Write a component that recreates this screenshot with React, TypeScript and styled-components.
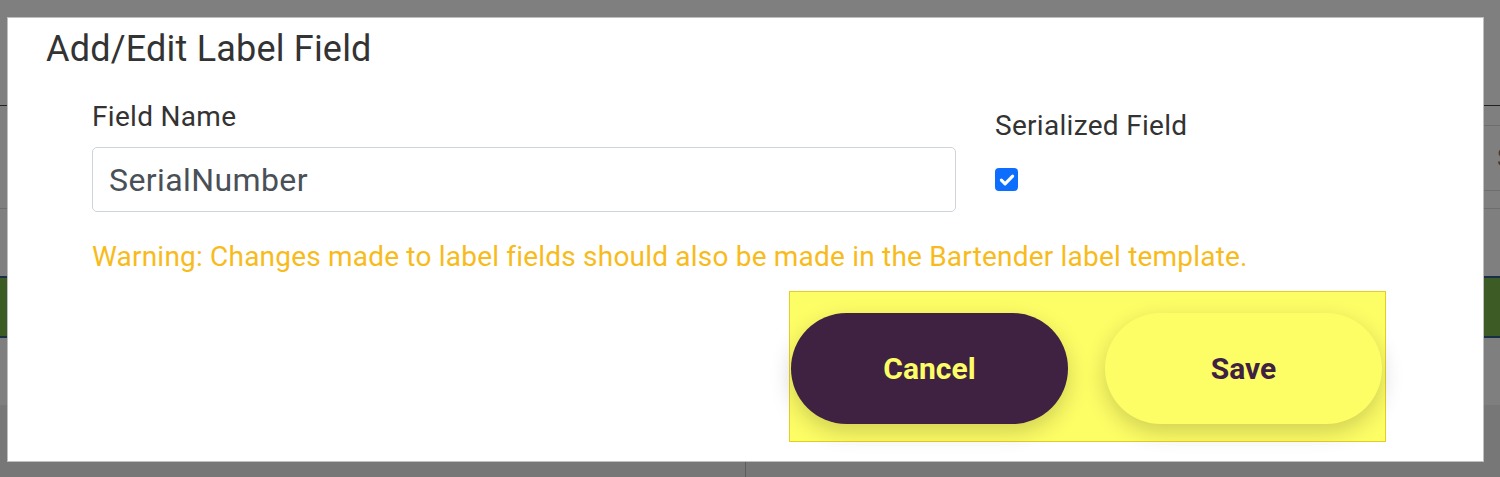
import styled, { createGlobalStyle } from 'styled-components'

const GlobalStyle = createGlobalStyle`
  html, body {
    margin: 0;
    padding: 0;
    background: #ffffff;
    font-family: Roboto, 'Liberation Sans', sans-serif;
  }
`

const PURPLE = '#3f2142'
const YELLOW = '#fdfd66'

function CheckIcon() {
  return (
    <svg width="18" height="18" viewBox="0 0 16 16" fill="none">
      <path
        d="M3 8.2l3.3 3.3L13 4.6"
        stroke="#fff"
        strokeWidth="2.8"
        strokeLinecap="round"
        strokeLinejoin="round"
      />
    </svg>
  )
}

export default function App() {
  return (
    <>
      <GlobalStyle />
      <Page>
        <Header />
        <Toolbar>
          <SearchBox>Search</SearchBox>
        </Toolbar>
        <TableRow />
        <TableRow selected />
        <TableRow />
        <TableRow muted>
          <Cell />
          <Cell />
        </TableRow>

        <Backdrop />

        <Modal>
          <ModalHeader>
            <Title>Add/Edit Label Field</Title>
          </ModalHeader>
          <ModalBody>
            <FieldRow>
              <NameColumn>
                <Label>Field Name</Label>
                <TextInput>SerialNumber</TextInput>
              </NameColumn>
              <SerialColumn>
                <Label>Serialized Field</Label>
                <Checkbox>
                  <CheckIcon />
                </Checkbox>
              </SerialColumn>
            </FieldRow>
            <Warning>
              Warning: Changes made to label fields should also be made in the
              Bartender label template.
            </Warning>
          </ModalBody>
          <ModalFooter>
            <ButtonGroup>
              <Button variant="dark">Cancel</Button>
              <Button variant="light">Save</Button>
            </ButtonGroup>
          </ModalFooter>
        </Modal>
      </Page>
    </>
  )
}

const Page = styled.div`
  position: relative;
  width: 1500px;
  height: 477px;
  overflow: hidden;
  display: flex;
  flex-direction: column;
  background: #ffffff;
`

const Header = styled.div`
  height: 105px;
  flex-shrink: 0;
  border-bottom: 1px solid #444444;
`

const Toolbar = styled.div`
  height: 103px;
  flex-shrink: 0;
  display: flex;
  justify-content: flex-end;
  align-items: flex-start;
  padding-top: 19px;
  box-sizing: border-box;
  border-bottom: 1px solid #dddddd;
`

const SearchBox = styled.div`
  width: 320px;
  height: 66px;
  margin-right: -300px;
  flex-shrink: 0;
  box-sizing: border-box;
  border: 1px solid #dddddd;
  border-right: none;
  padding-left: 16px;
  display: flex;
  align-items: center;
  font-size: 26px;
  color: #777777;
`

const TableRow = styled.div<{ selected?: boolean; muted?: boolean }>`
  height: ${({ selected }) => (selected ? 62 : 67)}px;
  flex: ${({ muted }) => (muted ? 1 : 'none')};
  display: flex;
  box-sizing: border-box;
  background: ${({ selected, muted }) =>
    selected ? '#7ab84a' : muted ? '#eeeeee' : '#ffffff'};
  border-top: ${({ selected }) => (selected ? '2px solid #2f5f8e' : 'none')};
  border-bottom: ${({ selected }) => (selected ? '2px solid #2f5f8e' : 'none')};
  padding-top: ${({ muted }) => (muted ? 51 : 0)}px;
`

const Cell = styled.div`
  width: 745px;
  border-right: 1px solid #bbbbbb;

  &:last-child {
    flex: 1;
    border-right: none;
  }
`

const Backdrop = styled.div`
  position: absolute;
  inset: 0;
  background: rgba(0, 0, 0, 0.5);
`

const Modal = styled.div`
  position: absolute;
  left: 7px;
  top: 17px;
  width: 1477px;
  height: 445px;
  box-sizing: border-box;
  background: #ffffff;
  border: 1px solid rgba(0, 0, 0, 0.25);
  display: flex;
  flex-direction: column;
  color: #333333;
`

const ModalHeader = styled.div`
  padding: 10px 0 0 38px;
`

const Title = styled.h4`
  margin: 0;
  font-size: 36px;
  line-height: 42px;
  font-weight: 400;
  letter-spacing: 0.2px;
  color: #333333;
`

const ModalBody = styled.div`
  padding: 31px 0 0 84px;
  display: flex;
  flex-direction: column;
`

const FieldRow = styled.div`
  display: flex;
  gap: 39px;
`

const NameColumn = styled.div`
  width: 864px;
  display: flex;
  flex-direction: column;
  gap: 14px;
`

const SerialColumn = styled.div`
  display: flex;
  flex-direction: column;
  align-items: flex-start;
  padding-top: 9px;
  gap: 26px;
`

const Label = styled.label`
  font-size: 28px;
  line-height: 32px;
  letter-spacing: 0.3px;
  color: #333333;
`

const TextInput = styled.div`
  height: 65px;
  box-sizing: border-box;
  border: 1px solid #ced4da;
  border-radius: 5px;
  padding: 0 16px;
  display: flex;
  align-items: center;
  font-size: 32px;
  letter-spacing: 0.4px;
  color: #495057;
`

const Checkbox = styled.div`
  width: 23px;
  height: 23px;
  border-radius: 4px;
  background: #0d6efd;
  display: flex;
  align-items: center;
  justify-content: center;
`

const Warning = styled.p`
  margin: 29px 0 0;
  font-size: 28px;
  line-height: 32px;
  letter-spacing: 0.2px;
  color: #f8bb1c;
`

const ModalFooter = styled.div`
  display: flex;
  justify-content: flex-end;
  padding: 18px 97px 0 0;
`

const ButtonGroup = styled.div`
  display: flex;
  gap: 37px;
  padding: 21px 3px 17px 1px;
  background: ${YELLOW};
  border: 1px solid #e6cf22;
`

const Button = styled.button<{ variant: 'dark' | 'light' }>`
  width: 277px;
  height: 111px;
  border: none;
  border-radius: 56px;
  font-family: Roboto, 'Liberation Sans', sans-serif;
  font-size: 30px;
  font-weight: 700;
  cursor: pointer;
  background: ${({ variant }) => (variant === 'dark' ? PURPLE : YELLOW)};
  color: ${({ variant }) => (variant === 'dark' ? YELLOW : PURPLE)};
  box-shadow: 0 8px 22px rgba(0, 0, 0, 0.18);
`
